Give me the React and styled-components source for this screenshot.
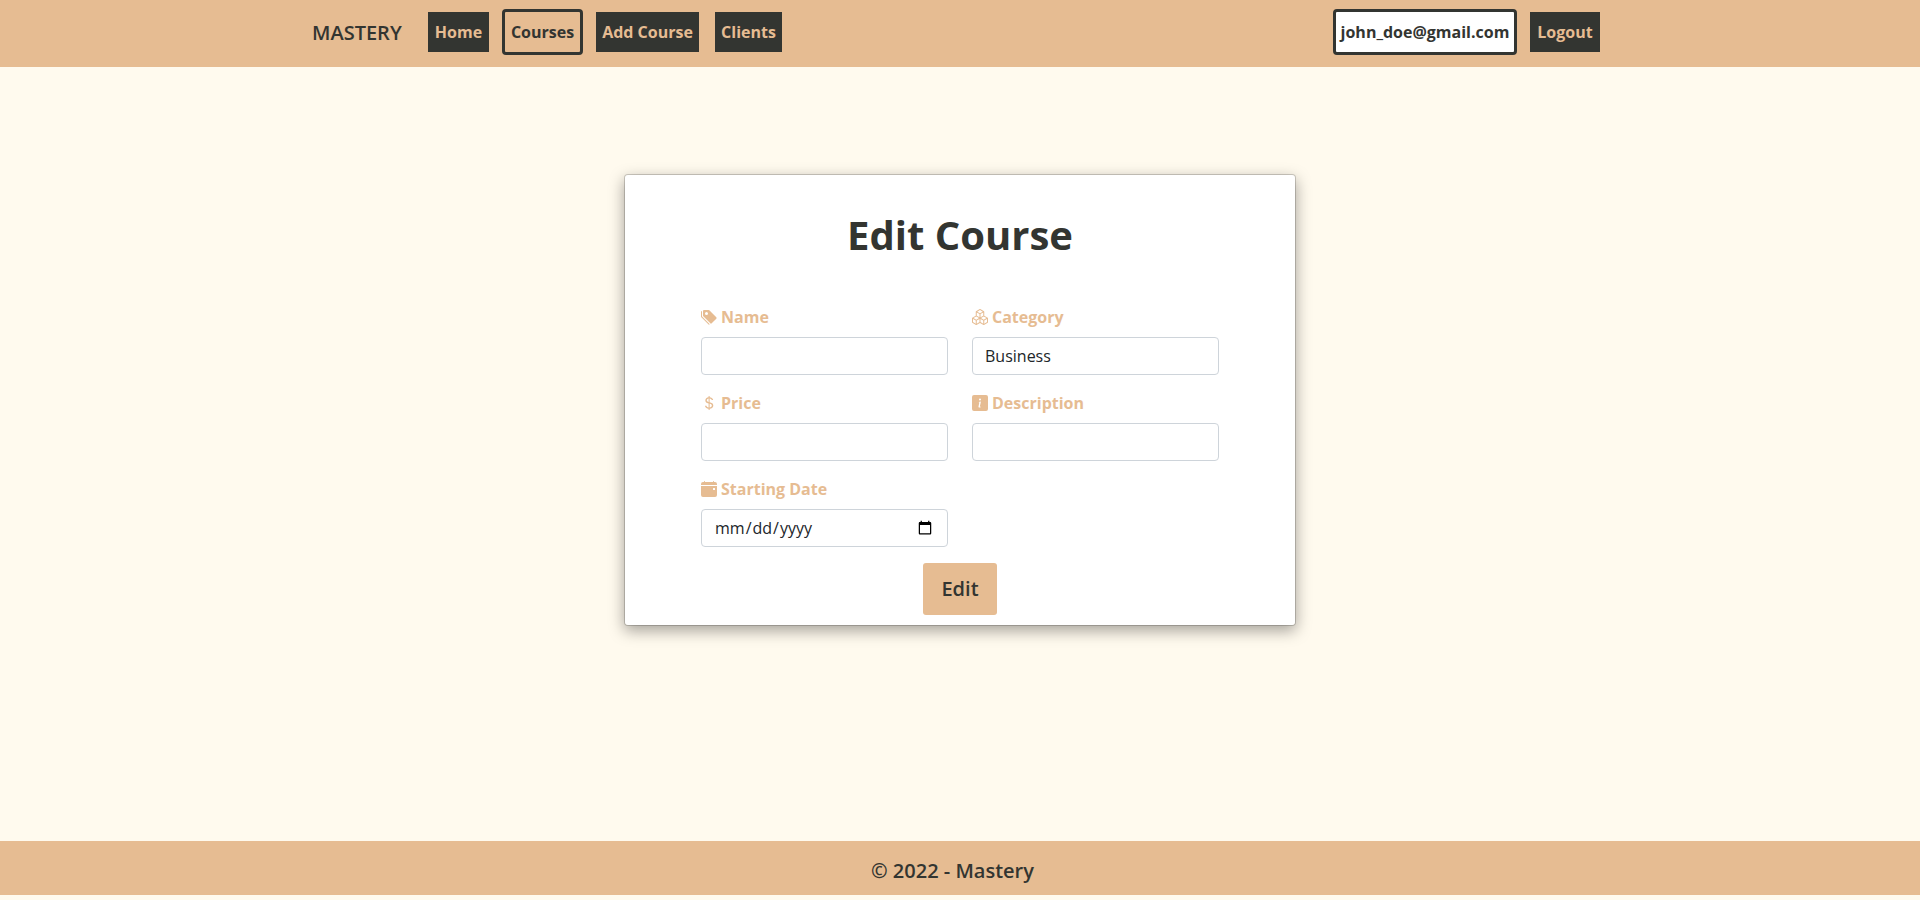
import React from "react";
import styled, { createGlobalStyle } from "styled-components";
import {
  BsTagsFill,
  BsBoxes,
  BsCurrencyDollar,
  BsInfoSquareFill,
  BsCalendarEventFill,
} from "react-icons/bs";

const sand = "#e6bc92";
const ink = "#333531";
const cream = "#fffaee";

const GlobalStyle = createGlobalStyle`
  *, *::before, *::after { box-sizing: border-box; }
  body {
    margin: 0;
    background: ${cream};
    color: #212529;
    font: 400 16px/24px "Segoe UI", "Open Sans", "Noto Sans", sans-serif;
  }
`;

const Page = styled.div`
  display: flex;
  flex-direction: column;
  height: 900px;
  padding-bottom: 5px;
  overflow: hidden;
`;

const Navbar = styled.header`
  display: flex;
  flex: none;
  align-items: flex-start;
  height: 67px;
  padding: 9px 320px 0 312px;
  background: ${sand};
`;

const Brand = styled.a`
  width: 116px;
  padding-top: 9px;
  color: ${ink};
  font-size: 20px;
  font-weight: 600;
  line-height: 30px;
  letter-spacing: ${(p) => p.$track}px;
  white-space: nowrap;
`;

const NavLinks = styled.nav`
  display: flex;
  align-items: center;
  height: 46px;
  &:last-child { margin-left: auto; }
`;

const NavLink = styled.a`
  width: ${(p) => p.$width}px;
  height: ${(p) => (p.$outlined ? 46 : 40)}px;
  margin-left: ${(p) => p.$gap || 0}px;
  padding-top: ${(p) => (p.$outlined ? 8 : 8)}px;
  border: ${(p) => (p.$outlined ? `3px solid ${ink}` : "0")};
  border-radius: ${(p) => (p.$outlined ? 4 : 0)}px;
  background: ${(p) => (p.$outlined ? p.$fill || "transparent" : ink)};
  color: ${(p) => (p.$outlined ? ink : sand)};
  font-weight: 700;
  text-align: center;
  letter-spacing: ${(p) => p.$track || 0}px;
  white-space: nowrap;
`;

const Main = styled.main`
  display: flex;
  flex: 1;
  align-items: flex-start;
  justify-content: center;
  padding-top: 107px;
`;

const Card = styled.form`
  display: flex;
  flex-direction: column;
  align-items: center;
  width: 672px;
  height: 452px;
  border: 1px solid rgba(0, 0, 0, 0.175);
  border-radius: 4px;
  background: #fff;
  background-clip: padding-box;
  box-shadow: 0 5px 15px rgba(0, 0, 0, 0.35);
`;

const Title = styled.h1`
  margin: 36px 0 0;
  color: ${ink};
  font-size: 40px;
  font-weight: 700;
  line-height: 48px;
  letter-spacing: ${(p) => p.$track}px;
`;

const Fields = styled.div`
  display: grid;
  grid-template-columns: 247px 247px;
  column-gap: 24px;
  row-gap: 16px;
  margin-top: 46px;
`;

const Field = styled.div`
  display: flex;
  flex-direction: column;
  gap: 8px;
`;

const Label = styled.label`
  display: flex;
  align-items: center;
  gap: 4px;
  height: 24px;
  color: ${sand};
  font-weight: 700;
  letter-spacing: ${(p) => p.$track}px;
  svg { flex: none; width: 16px; height: 16px; }
`;

const Input = styled.input`
  display: block;
  width: 100%;
  height: 38px;
  padding: 6px 12px;
  border: 1px solid #ced4da;
  border-radius: 4px;
  outline: 0;
  appearance: none;
  background: #fff;
  color: #212529;
  font: inherit;
  letter-spacing: ${(p) => p.$track || 0}px;
`;

const EditButton = styled.button`
  width: 74px;
  height: 52px;
  margin-top: 16px;
  padding: 0 0 1px;
  border: 0;
  border-radius: 3px;
  background: ${sand};
  color: ${ink};
  font: inherit;
  font-size: 20px;
  font-weight: 600;
  letter-spacing: ${(p) => p.$track}px;
`;

const Footer = styled.footer`
  flex: none;
  height: 54px;
  padding: 15px 15px 0 0;
  background: ${sand};
  color: ${ink};
  font-size: 20px;
  font-weight: 600;
  line-height: 30px;
  text-align: center;
  letter-spacing: ${(p) => p.$track}px;
`;

export default function App() {
  return (
    <Page>
      <GlobalStyle />
      <Navbar>
        <Brand $track={0}>MASTERY</Brand>
        <NavLinks>
          <NavLink $width={61}>Home</NavLink>
          <NavLink $width={81} $gap={13} $outlined>Courses</NavLink>
          <NavLink $width={103} $gap={13}>Add Course</NavLink>
          <NavLink $width={67} $gap={16}>Clients</NavLink>
        </NavLinks>
        <NavLinks>
          <NavLink $width={184} $outlined $fill="#fff">john_doe@gmail.com</NavLink>
          <NavLink $width={70} $gap={13}>Logout</NavLink>
        </NavLinks>
      </Navbar>
      <Main>
        <Card>
          <Title $track={0}>Edit Course</Title>
          <Fields>
            <Field>
              <Label htmlFor="name"><BsTagsFill />Name</Label>
              <Input id="name" />
            </Field>
            <Field>
              <Label htmlFor="category"><BsBoxes />Category</Label>
              <Input as="select" id="category"><option>Business</option></Input>
            </Field>
            <Field>
              <Label htmlFor="price"><BsCurrencyDollar />Price</Label>
              <Input id="price" />
            </Field>
            <Field>
              <Label htmlFor="description"><BsInfoSquareFill />Description</Label>
              <Input id="description" />
            </Field>
            <Field>
              <Label htmlFor="date"><BsCalendarEventFill />Starting Date</Label>
              <Input id="date" type="date" />
            </Field>
          </Fields>
          <EditButton type="button" $track={0}>Edit</EditButton>
        </Card>
      </Main>
      <Footer $track={0}>© 2022 - Mastery</Footer>
    </Page>
  );
}
